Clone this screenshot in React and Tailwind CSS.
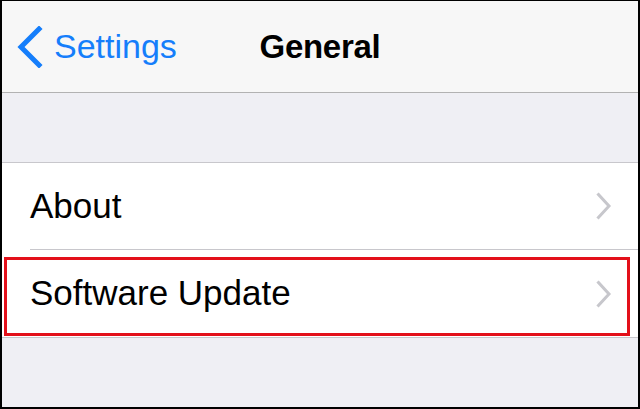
import React from 'react';

const font = { fontFamily: '"Liberation Sans", Arial, sans-serif' };

function Chevron() {
  return (
    <svg width="16" height="28" viewBox="0 0 16 28" className="shrink-0">
      <path d="M2.5 2.5 L13 14 L2.5 25.5" fill="none" stroke="#c7c7cc" strokeWidth="3" strokeLinecap="square" />
    </svg>
  );
}

function Row({ label, last, highlighted }) {
  return (
    <div className="relative h-[87px] pl-[28px] flex">
      <div className={`flex-1 flex items-center pr-[26px] ${last ? '' : 'border-b border-[#c8c7cc]'}`}>
        <span className="flex-1 text-[35px] text-black">{label}</span>
        <Chevron />
      </div>
      {highlighted && (
        <div className="absolute left-[2px] right-[8px] top-[7px] bottom-[1px] border-[3px] border-[#e3101a]" />
      )}
    </div>
  );
}

export default function App() {
  return (
    <div style={font} className="w-[640px] h-[409px] bg-[#efeff4] border-l-2 border-t border-r-2 border-b-2 border-black flex flex-col overflow-hidden">
      {/* nav bar */}
      <div className="h-[92px] shrink-0 bg-[#f7f7f7] border-b border-[#b2b2b2] relative flex items-center">
        <div className="flex items-center pl-[14px] gap-[10px] text-[#157efb]">
          <svg width="28" height="42" viewBox="0 0 28 42">
            <path d="M23 3 L5 21 L23 39" fill="none" stroke="#157efb" strokeWidth="5" strokeLinecap="square" />
          </svg>
          <span className="text-[34px]">Settings</span>
        </div>
        <div className="absolute inset-0 flex items-center justify-center">
          <span className="text-[33px] font-bold text-black tracking-[-0.3px]">General</span>
        </div>
      </div>

      {/* spacer */}
      <div className="h-[69px] shrink-0" />

      {/* group */}
      <div className="bg-white border-t border-b border-[#c8c7cc]">
        <Row label="About" />
        <Row label="Software Update" last highlighted />
      </div>
    </div>
  );
}
